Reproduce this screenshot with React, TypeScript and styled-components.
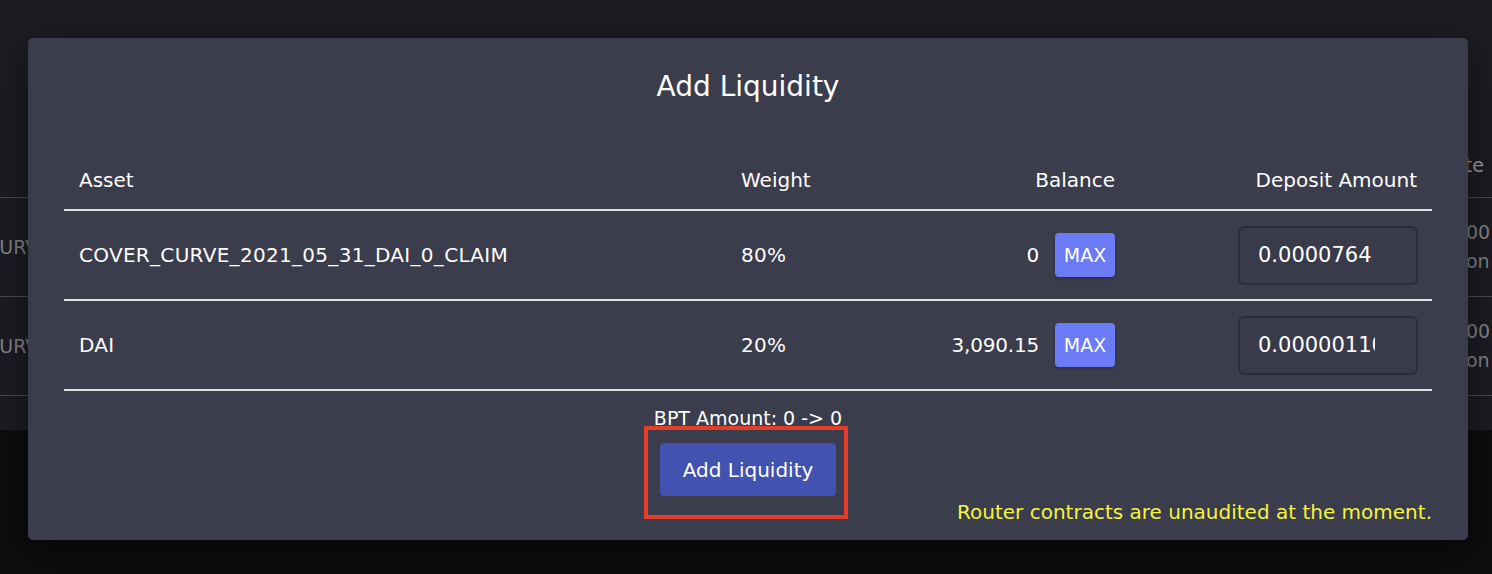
import React from "react";
import styled, { createGlobalStyle } from "styled-components";

const Global = createGlobalStyle`
  html, body { margin: 0; padding: 0; }
  body {
    width: 1492px;
    height: 574px;
    overflow: hidden;
    background: #0d0d10;
    font-family: "DejaVu Sans", "Noto Sans", sans-serif;
    color: #fff;
  }
`;

const Page = styled.div`
  position: relative;
  width: 1492px;
  height: 574px;
  overflow: hidden;
  background: #0d0d10;
`;

const BackCard = styled.div`
  height: 430px;
  background: #1c1c23;
  padding-top: 134px;
  box-sizing: border-box;
  overflow: hidden;
`;

const BackRow = styled.div<{ $head?: boolean }>`
  display: flex;
  justify-content: space-between;
  align-items: center;
  height: ${(p) => (p.$head ? "63px" : "98px")};
  border-bottom: 1px solid #4b4b53;
  color: ${(p) => (p.$head ? "#a3a3a8" : "#86868c")};
  font-size: 19px;
`;

const BackLeft = styled.div`
  width: 42px;
  margin-left: -14px;
  white-space: nowrap;
  overflow: hidden;
`;

const BackRight = styled.div<{ $head?: boolean }>`
  width: ${(p) => (p.$head ? "24px" : "26px")};
  padding-right: ${(p) => (p.$head ? "8px" : "0")};
  display: flex;
  flex-direction: column;
  align-items: ${(p) => (p.$head ? "flex-end" : "flex-start")};
  white-space: nowrap;
  line-height: 29px;
  overflow: hidden;
`;

const Overlay = styled.div`
  position: absolute;
  inset: 0;
`;

const Modal = styled.div`
  position: absolute;
  left: 28px;
  top: 38px;
  width: 1440px;
  height: 502px;
  box-sizing: border-box;
  background: #3b3c4c;
  border-radius: 5px;
  box-shadow: 0 10px 40px rgba(0, 0, 0, 0.55);
  padding: 27px 36px 0;
  display: flex;
  flex-direction: column;
`;

const Title = styled.h2`
  margin: 0;
  text-align: center;
  font-size: 28px;
  font-weight: 400;
  line-height: 44px;
`;

const Table = styled.div`
  margin-top: 42px;
  display: grid;
  grid-template-columns: 662px 150px 254px 302px;
`;

const HeadCell = styled.div<{ $align?: string }>`
  padding: 0 15px;
  height: 58px;
  display: flex;
  align-items: center;
  justify-content: ${(p) => p.$align || "flex-start"};
  font-size: 20px;
  border-bottom: 2px solid #e2e2e6;
`;

const Cell = styled.div<{ $align?: string }>`
  padding: 0 15px;
  height: 88px;
  display: flex;
  align-items: center;
  gap: 16px;
  justify-content: ${(p) => p.$align || "flex-start"};
  font-size: 20px;
  letter-spacing: 0.3px;
  border-bottom: 2px solid #e2e2e6;
`;

const BalanceValue = styled.span`
  letter-spacing: -0.2px;
`;

const MaxButton = styled.button`
  width: 60px;
  height: 44px;
  border: none;
  border-radius: 4px;
  background: #6b7bf6;
  color: #fff;
  font-family: inherit;
  font-size: 19px;
  padding: 0;
  box-shadow: 0 2px 3px rgba(0, 0, 0, 0.2);
`;

const AmountInput = styled.input`
  width: 180px;
  height: 59px;
  box-sizing: border-box;
  margin-right: -1px;
  border: 2px solid #2b2c38;
  border-radius: 6px;
  background: #3a3b4a;
  color: #fff;
  font-family: inherit;
  font-size: 21px;
  padding: 0 41px 0 18px;
  outline: none;
`;

const Footer = styled.div`
  display: flex;
  flex-direction: column;
  align-items: center;
  padding-top: 15px;
`;

const Bpt = styled.div`
  font-size: 19px;
  line-height: 24px;
`;

const ButtonWrap = styled.div`
  position: relative;
  margin-top: 13px;
`;

const SubmitButton = styled.button`
  width: 176px;
  height: 53px;
  border: none;
  border-radius: 4px;
  background: #4152b0;
  color: #fff;
  font-family: inherit;
  font-size: 20px;
  padding: 0;
`;

const Highlight = styled.div`
  position: absolute;
  left: -16px;
  top: -17px;
  width: 204px;
  height: 93px;
  box-sizing: border-box;
  border: 4px solid #e53d27;
  pointer-events: none;
`;

const Warning = styled.div`
  align-self: flex-end;
  margin-top: 3px;
  color: #f5f53e;
  font-size: 20px;
  line-height: 26px;
`;

const rows = [
  { asset: "COVER_CURVE_2021_05_31_DAI_0_CLAIM", weight: "80%", balance: "0", amount: "0.0000764" },
  { asset: "DAI", weight: "20%", balance: "3,090.15", amount: "0.0000011049" },
];

export default function App() {
  return (
    <Page>
      <Global />
      <BackCard>
        <BackRow $head>
          <BackLeft>&nbsp;</BackLeft>
          <BackRight $head>Date</BackRight>
        </BackRow>
        <BackRow>
          <BackLeft>CURVE</BackLeft>
          <BackRight>
            <span>00:00</span>
            <span>on</span>
          </BackRight>
        </BackRow>
        <BackRow>
          <BackLeft>CURVE</BackLeft>
          <BackRight>
            <span>00:00</span>
            <span>on</span>
          </BackRight>
        </BackRow>
      </BackCard>
      <Overlay>
        <Modal>
          <Title>Add Liquidity</Title>
          <Table>
            <HeadCell>Asset</HeadCell>
            <HeadCell>Weight</HeadCell>
            <HeadCell $align="flex-end">Balance</HeadCell>
            <HeadCell $align="flex-end">Deposit Amount</HeadCell>
            {rows.map((r) => (
              <React.Fragment key={r.asset}>
                <Cell>{r.asset}</Cell>
                <Cell>{r.weight}</Cell>
                <Cell $align="flex-end">
                  <BalanceValue>{r.balance}</BalanceValue>
                  <MaxButton>MAX</MaxButton>
                </Cell>
                <Cell $align="flex-end">
                  <AmountInput defaultValue={r.amount} />
                </Cell>
              </React.Fragment>
            ))}
          </Table>
          <Footer>
            <Bpt>BPT Amount: 0 -&gt; 0</Bpt>
            <ButtonWrap>
              <SubmitButton>Add Liquidity</SubmitButton>
              <Highlight />
            </ButtonWrap>
            <Warning>Router contracts are unaudited at the moment.</Warning>
          </Footer>
        </Modal>
      </Overlay>
    </Page>
  );
}
